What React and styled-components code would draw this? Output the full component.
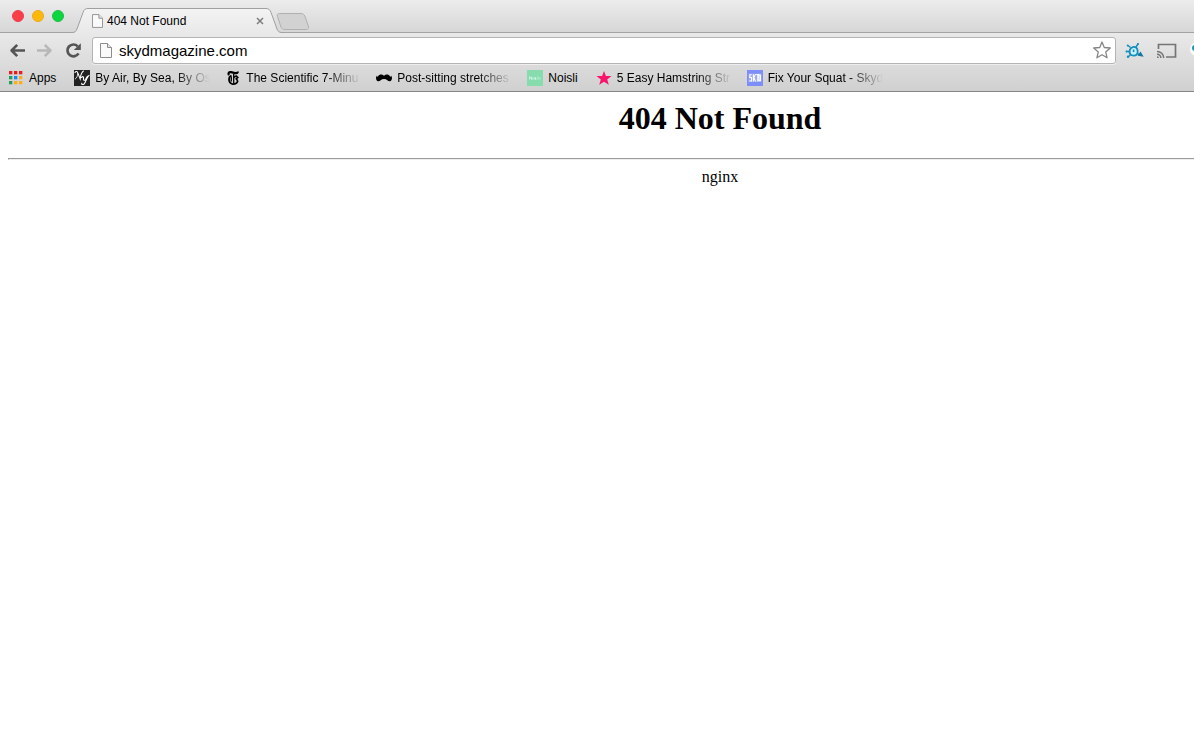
import React, { useState } from "react";
import styled, { createGlobalStyle } from "styled-components";

const GlobalStyle = createGlobalStyle`
  body {
    margin: 0;
    background: #fff;
    overflow: hidden;
  }
  * {
    box-sizing: border-box;
  }
`;

const Browser = styled.div`
  font-family: "Liberation Sans", Helvetica, Arial, sans-serif;
  font-size: 12px;
  color: #000;
  overflow: hidden;
`;

const TabStrip = styled.div`
  display: flex;
  align-items: flex-end;
  height: 33px;
  padding-left: 12px;
  background: linear-gradient(#ececec, #d6d6d6);
  box-shadow: inset 0 -1px 0 #a3a3a3;
`;

const WindowButtons = styled.div`
  display: flex;
  gap: 8px;
  padding-bottom: 11px;
`;

const WindowButton = styled.button`
  width: 12px;
  height: 12px;
  padding: 0;
  border: 1px solid ${(props) => props.$edge};
  border-radius: 50%;
  background: ${(props) => props.$color};
`;

const Tab = styled.div`
  position: relative;
  display: flex;
  align-items: center;
  width: 212px;
  height: 25px;
  margin-left: 8px;
  padding: 0 20px;
`;

const TabShape = styled.svg`
  position: absolute;
  top: 0;
  left: 0;
`;

const TabTitle = styled.span`
  position: relative;
  flex: 1;
  margin-left: 4px;
  white-space: nowrap;
`;

const PlainButton = styled.button`
  position: relative;
  display: flex;
  flex: none;
  padding: 0;
  border: 0;
  background: none;
`;

const NewTabButton = styled(PlainButton)`
  margin-left: -8px;
  padding-bottom: 3px;
`;

const Icon = styled.svg`
  position: relative;
  display: block;
  flex: none;
`;

const Chrome = styled.div`
  background: linear-gradient(#e9e9e9, #d0d0d0);
  border-bottom: 1px solid #858585;
`;

const Toolbar = styled.div`
  display: flex;
  align-items: center;
  height: 34px;
  padding-left: 8px;
`;

const NavButtons = styled.div`
  display: flex;
  align-items: center;
  gap: 10px;
  margin-right: 10px;
`;

const Omnibox = styled.div`
  display: flex;
  align-items: center;
  flex: 1;
  min-width: 0;
  height: 27px;
  padding: 0 4px 0 7px;
  background: #fff;
  border: 1px solid #b4b4b4;
  border-radius: 3px;
  box-shadow: 0 1px 0 #eee;
`;

const UrlInput = styled.input`
  flex: 1;
  min-width: 0;
  margin: 0 8px 0 7px;
  padding: 2px 0 0;
  border: 0;
  outline: 0;
  background: none;
  font-family: inherit;
  font-size: 15px;
  line-height: 20px;
  color: #000;
`;

const Extensions = styled.div`
  display: flex;
  align-items: center;
  gap: 13px;
  width: 78px;
  padding: 2px 0 0 9px;
  overflow: hidden;
`;

const BookmarksBar = styled.nav`
  display: flex;
  align-items: center;
  gap: 15px;
  height: 24px;
  padding: 0 8px 2px;
`;

const Bookmark = styled.a`
  display: flex;
  align-items: center;
  gap: 5px;
  color: #000;
  text-decoration: none;
`;

const BookmarkLabel = styled.span`
  width: ${(props) => (props.$faded ? "115px" : "auto")};
  padding-right: ${(props) => (props.$faded ? "0" : "3px")};
  overflow: hidden;
  white-space: nowrap;
  line-height: 16px;
  mask-image: ${(props) =>
    props.$faded ? "linear-gradient(to right, #000 80px, transparent 115px)" : "none"};
`;

// the document is wider than the visible part of the window
const Page = styled.main`
  margin-right: -246px;
  padding: 8px;
  font-family: "Liberation Serif", "Times New Roman", serif;
  font-size: 16px;
  line-height: 18px;
  text-align: center;
`;

const PageTitle = styled.h1`
  margin: 0 0 22px;
  font-size: 32px;
  line-height: 36px;
`;

const Rule = styled.hr`
  margin: 0 0 8px;
  border: 1px inset #eee;
`;

const PageIcon = ({ width, height }) => (
  <Icon width={width} height={height} viewBox="0 0 12 15">
    <path d="M.5.5h7l4 4v10H.5z" fill="#fafafa" stroke="#8c8c8c" />
    <path d="M7.5.5v4h4" fill="#e4e4e4" stroke="#8c8c8c" />
  </Icon>
);

const BackIcon = () => (
  <Icon width="18" height="18" viewBox="0 0 18 18" fill="none" stroke="#555" strokeWidth="2.7">
    <path d="M9.2 3.9 3.6 9.5l5.600 5.600M3.500 9.500H17" strokeLinejoin="round" />
  </Icon>
);

const ForwardIcon = () => (
  <Icon width="18" height="18" viewBox="0 0 18 18" fill="none" stroke="#b8b8b8" strokeWidth="2.6">
    <path d="m8.800 3.900 5.600 5.600-5.600 5.600M14.500 9.500H1" strokeLinejoin="round" />
  </Icon>
);

const ReloadIcon = () => (
  <Icon width="18" height="18" viewBox="0 0 18 18">
    <path d="M13.700 5.400A5.900 5.900 0 1 0 14.500 12.300" fill="none" stroke="#555" strokeWidth="2.700" />
    <path d="M16.800 2.300v6.700H9.800z" fill="#555" />
  </Icon>
);

const StarIcon = () => (
  <Icon width="18" height="18" viewBox="0 0 18 18">
    <path
      d="m9 1 2.3 5.500 6 .5-4.600 3.900 1.400 5.900L9 13.700l-5.100 3.100 1.400-5.900L.7 7l6-.5z"
      fill="#fff"
      stroke="#858585"
      strokeWidth="1.300"
      strokeLinejoin="round"
    />
  </Icon>
);

const SprocketIcon = () => (
  <Icon width="19" height="18" viewBox="0 0 19 18">
    <g fill="none" stroke="#168fbd" strokeWidth="1.400">
      <path d="M5.500 5.500 3 3.500M11 5l2.300-3.500M4.500 9.500H1M5.500 13 3 15M12 11.500l4 1.500" />
      <path d="M5 7.500C6 5 9.500 4 11.500 6c1.500 1.500 1.500 5 .3 6.500-1.500 1.500-5 1.500-6.300 0C4.500 11.500 4.500 9 5 7.500z" fill="#c9f1fb" strokeWidth="1.800" />
    </g>
    <path d="M7.800 7.500h1.600v2.600H7.800z" fill="#168fbd" />
    <path d="m15.500 9.500 3.200 5.200-6-.9z" fill="#0f77a0" />
    <circle cx="2.700" cy="3.500" r="1" fill="#168fbd" />
    <circle cx="13" cy="2" r="1" fill="#168fbd" />
    <circle cx="1.500" cy="9.500" r="1" fill="#168fbd" />
    <circle cx="3" cy="14.800" r="1.200" fill="#168fbd" />
  </Icon>
);

const CastIcon = () => (
  <Icon width="20" height="16" viewBox="0 0 20 16" fill="none" stroke="#757575">
    <path d="M1.500 6V1.500h17v12.500H9" strokeWidth="1.700" />
    <path d="M0 8.500A6.500 6.500 0 0 1 6.700 15M0 11.300A3.700 3.700 0 0 1 3.900 15" strokeWidth="1.500" />
    <path d="M0 13.200A1.800 1.800 0 0 1 1.900 15H0z" fill="#757575" stroke="none" />
  </Icon>
);

const BadgeIcon = () => (
  <Icon width="18" height="18" viewBox="0 0 18 18">
    <circle cx="7" cy="7" r="7" fill="#fff" />
    <circle cx="5" cy="6" r="3" fill="#168fbd" />
  </Icon>
);

const appColors = [
  "#ec1c1c", "#ec1c1c", "#ec1c1c",
  "#1fa05a", "#1a86f8", "#fbae17",
  "#1fa05a", "#fbae17", "#fbae17",
];

const AppsIcon = () => (
  <Icon width="16" height="16" viewBox="0 0 16 16">
    {appColors.map((color, i) => (
      <rect key={i} x={1 + (i % 3) * 5} y={1 + Math.floor(i / 3) * 5} width="3.300" height="3.300" fill={color} />
    ))}
  </Icon>
);

const NyIcon = () => (
  <Icon width="16" height="16" viewBox="0 0 16 16">
    <path d="M0 0h16v16H0z" fill="#222" />
    <g fill="none" stroke="#fff" strokeLinecap="round">
      <path d="M1 2.500c1-1.800 2.300-1 2.800.4L6.200 9c.5-3 .5-6 3.200-8" strokeWidth="1.100" />
      <path d="M3.700 3.500C3.500 6 3 8 1.300 9" strokeWidth=".8" />
      <path d="M7.500 7.500c1.200-1.500 2.300-.9 2 1-.4 2.300 1.200 2.300 2.200.7.8-1.400.8-2.700 2.800-3.400-2.300 2.800-2.500 6-4.300 8-1 1.200-2.900.9-2.400-.5" strokeWidth="1.100" />
    </g>
  </Icon>
);

const TimesIcon = () => (
  <Icon width="16" height="16" viewBox="0 0 16 16">
    <g fill="none" stroke="#000">
      <path d="M4 5.200C2.800 3.500 3.800 1.800 6 2.200l4 .9c1.700.3 2.800-.2 2.800-1.600" strokeWidth="2.200" />
      <path d="M8.700 4v9.500M6.300 6.500v5" strokeWidth="1.300" />
      <path d="M6.500 5.500c-3.400 1.200-3.400 7.300.7 8.500 2.800.8 5-.9 5.600-3" strokeWidth="1.800" />
      <path d="M8.700 7.300 11.300 6l1.500 1.400-1.600 1.400 1.600 2.200" strokeWidth="1.600" />
    </g>
  </Icon>
);

const MustacheIcon = () => (
  <Icon width="16" height="16" viewBox="0 0 16 16">
    <path
      d="M.6 5.300C.4 6.800 1.300 7 2 6.200 3.300 4.300 6.300 4 8 5.800 9.700 4 12.700 4.300 14 6.200c.7.8 1.600.6 1.400-.9 1 2.500.7 5.200-1.200 5.900-2 .6-3-2.200-6.200-2.200s-4.200 2.800-6.200 2.200C-.1 10.500-.4 7.800.6 5.300z"
      fill="#000"
    />
  </Icon>
);

const NoisliIcon = () => (
  <Icon width="16" height="16" viewBox="0 0 16 16">
    <path d="M0 0h16v16H0z" fill="#87dcae" />
    <path
      d="M2.500 9.500v-3l2 3v-3M9 7.500H7.700v1H9v1H7.500M11 6.500v3M13 7.500v2"
      fill="none"
      stroke="#d3f5e2"
      strokeWidth=".8"
    />
    <circle cx="5.900" cy="8.500" r=".8" fill="none" stroke="#d3f5e2" strokeWidth=".6" />
  </Icon>
);

const PinkStarIcon = () => (
  <Icon width="16" height="16" viewBox="0 0 16 16">
    <path d="m8 1 1.900 4.900h5.600l-4.300 3.500 1.600 5.400L8 11.700l-4.800 3.100 1.600-5.400L.5 5.900h5.600z" fill="#f8146c" />
  </Icon>
);

const SkydIcon = () => (
  <Icon width="16" height="16" viewBox="0 0 16 16">
    <path d="M0 0h16v16H0z" fill="#7d8ef8" />
    <path d="M1.500 3.500h13v8.500h-13z" fill="#9ba8fb" />
    <path
      d="M4.700 4.800H2.800v2.700h1.700V11H2.300M6.400 4.200v7.200M8.600 4.200 6.800 7.500l1.800 3.900M9.300 4.500h3M10.800 4.500v6.900M12 5h1.500v5.800H12z"
      fill="none"
      stroke="#fff"
      strokeWidth="1.100"
    />
  </Icon>
);

const bookmarks = [
  { label: "Apps", icon: AppsIcon },
  { label: "By Air, By Sea, By Os", icon: NyIcon, faded: true },
  { label: "The Scientific 7-Minu", icon: TimesIcon, faded: true },
  { label: "Post-sitting stretches", icon: MustacheIcon, faded: true },
  { label: "Noisli", icon: NoisliIcon },
  { label: "5 Easy Hamstring Str", icon: PinkStarIcon, faded: true },
  { label: "Fix Your Squat - Skyd", icon: SkydIcon, faded: true },
];

export default function App() {
  const [url, setUrl] = useState("skydmagazine.com");

  return (
    <Browser>
      <GlobalStyle />
      <TabStrip>
        <WindowButtons>
          <WindowButton aria-label="Close window" $color="#fc3e49" $edge="#e8414a" />
          <WindowButton aria-label="Minimize window" $color="#fdb90b" $edge="#eca911" />
          <WindowButton aria-label="Zoom window" $color="#0bd640" $edge="#1cc043" />
        </WindowButtons>
        <Tab>
          <TabShape width="212" height="25" viewBox="0 0 212 25">
            <defs>
              <linearGradient id="tabFill" x1="0" y1="0" x2="0" y2="1">
                <stop offset="0" stopColor="#f3f3f3" />
                <stop offset="1" stopColor="#e9e9e9" />
              </linearGradient>
            </defs>
            <path
              d="M0 25v-.5c3 0 4-1 5-3.500L11 4.500C12 1.500 13.500.5 16 .5h178c2.500 0 4 1 5 4L205 21c1 2.500 2 3.500 5 3.500h2v.5z"
              fill="url(#tabFill)"
            />
            <path
              d="M0 24.500c3 0 4-1 5-3.500L11 4.500C12 1.500 13.500.5 16 .5h178c2.500 0 4 1 5 4L205 21c1 2.500 2 3.500 5 3.500h2"
              fill="none"
              stroke="#a0a0a0"
            />
          </TabShape>
          <PageIcon width="11" height="14" />
          <TabTitle>404 Not Found</TabTitle>
          <PlainButton aria-label="Close tab">
            <Icon width="8" height="8" viewBox="0 0 8 8">
              <path d="m1 1 6 6m0-6L1 7" stroke="#7d7d7d" strokeWidth="1.500" />
            </Icon>
          </PlainButton>
        </Tab>
        <NewTabButton aria-label="New tab">
          <Icon width="34" height="17" viewBox="0 0 34 17">
            <path
              d="M3.500.5h21.500c2 0 3 .8 3.800 2.500l3.500 10c.8 2-.2 3.500-2 3.500H9c-2 0-3.200-.8-4-2.500L1.500 3.500C.8 1.600 1.500.5 3.500.5z"
              fill="#d2d2d2"
              stroke="#b0b0b0"
            />
          </Icon>
        </NewTabButton>
      </TabStrip>

      <Chrome>
        <Toolbar>
          <NavButtons>
            <PlainButton aria-label="Back">
              <BackIcon />
            </PlainButton>
            <PlainButton aria-label="Forward">
              <ForwardIcon />
            </PlainButton>
            <PlainButton aria-label="Reload">
              <ReloadIcon />
            </PlainButton>
          </NavButtons>
          <Omnibox>
            <PageIcon width="12" height="15" />
            <UrlInput aria-label="Address" value={url} onChange={(e) => setUrl(e.target.value)} />
            <PlainButton aria-label="Bookmark this page">
              <StarIcon />
            </PlainButton>
          </Omnibox>
          <Extensions>
            <PlainButton aria-label="Sprocket">
              <SprocketIcon />
            </PlainButton>
            <PlainButton aria-label="Cast">
              <CastIcon />
            </PlainButton>
            <PlainButton aria-label="Extension">
              <BadgeIcon />
            </PlainButton>
          </Extensions>
        </Toolbar>
        <BookmarksBar>
          {bookmarks.map(({ label, icon: BookmarkIcon, faded }) => (
            <Bookmark key={label} href="#">
              <BookmarkIcon />
              <BookmarkLabel $faded={faded}>{label}</BookmarkLabel>
            </Bookmark>
          ))}
        </BookmarksBar>
      </Chrome>

      <Page>
        <PageTitle>404 Not Found</PageTitle>
        <Rule />
        nginx
      </Page>
    </Browser>
  );
}
